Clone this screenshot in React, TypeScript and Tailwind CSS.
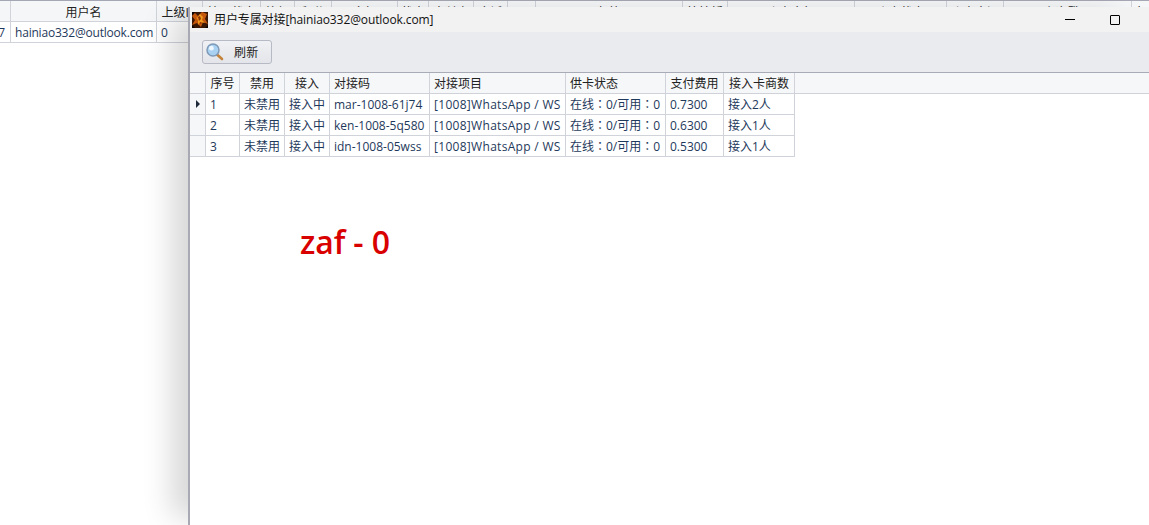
import * as React from 'react';

const backColumns = [
  { label: '', width: 'w-[11px]' },
  { label: '用户名', width: 'w-[146px]' },
  { label: '上级ID', width: 'w-[46px]' },
  { label: '接入状态', width: 'w-[58px]' },
  { label: '等级', width: 'w-[34px]' },
  { label: '积分', width: 'w-[37px]' },
  { label: '余额', width: 'w-[66px]' },
  { label: '状态', width: 'w-[31px]' },
  { label: '支付宝', width: 'w-[45px]' },
  { label: '电话', width: 'w-[34px]' },
  { label: 'QQ', width: 'w-[28px]' },
  { label: '邮箱', width: 'w-[147px]' },
  { label: '快捷折', width: 'w-[45px]' },
  { label: '账户余额', width: 'w-[127px]' },
  { label: '账户状态', width: 'w-[92px]' },
  { label: '账户来源', width: 'w-[57px]' },
  { label: '上次登录', width: 'w-[128px]' },
  { label: '备', width: 'w-[18px]' },
];

const columns = [
  { label: '序号', width: 'w-[34px]', align: 'text-center' },
  { label: '禁用', width: 'w-[45px]', align: 'text-center' },
  { label: '接入', width: 'w-[45px]', align: 'text-center' },
  { label: '对接码', width: 'w-[100px]', align: 'pl-[4px]' },
  { label: '对接项目', width: 'w-[136px]', align: 'pl-[4px]' },
  { label: '供卡状态', width: 'w-[100px]', align: 'pl-[4px]' },
  { label: '支付费用', width: 'w-[58px]', align: 'text-center' },
  { label: '接入卡商数', width: 'w-[71px]', align: 'text-center' },
];

const rows = [
  ['1', '未禁用', '接入中', 'mar-1008-61j74', '[1008]WhatsApp / WS', '在线：0/可用：0', '0.7300', '接入2人'],
  ['2', '未禁用', '接入中', 'ken-1008-5q580', '[1008]WhatsApp / WS', '在线：0/可用：0', '0.6300', '接入1人'],
  ['3', '未禁用', '接入中', 'idn-1008-05wss', '[1008]WhatsApp / WS', '在线：0/可用：0', '0.5300', '接入1人'],
];

// the project and card status columns need their own tracking / centred colon
const cellExtra = (c: number) => {
  if (c === 4) return 'tracking-[0.3px]';
  if (c === 5) return "font-['Open_Sans','Noto_Sans_CJK_TC',sans-serif]";
  return '';
};

const App: React.FC = () => {
  return (
    <div className="relative h-[525px] w-[1149px] overflow-hidden bg-white font-['Open_Sans','Noto_Sans_CJK_SC',sans-serif] text-[12px] text-[#1e395b]">
      {/* grid behind the window */}
      <div className="flex h-[22px] border-t border-b border-t-[#a5a8b4] border-b-[#d0d3da] bg-[#f5f6f7]">
        {backColumns.map((col, i) => (
          <div
            key={i}
            className={`${col.width} shrink-0 overflow-hidden whitespace-nowrap border-r border-[#d0d3da] text-center leading-[23px] text-[#222]`}
          >
            {col.label}
          </div>
        ))}
      </div>
      <div className="flex h-[21px] w-[189px] border-b border-[#d0d3da]">
        <div className="flex w-[11px] shrink-0 justify-end border-r border-[#d0d3da] pr-[5px] leading-[22px]">7</div>
        <div className="w-[146px] shrink-0 border-r border-[#d0d3da] pl-[4px] leading-[22px] tracking-[-0.2px]">hainiao332@outlook.com</div>
        <div className="pl-[4px] leading-[22px]">0</div>
      </div>

      {/* window */}
      <div className="absolute left-[188px] top-[7px] flex h-[518px] w-[961px] flex-col border-l-2 border-[#a8a9b3] bg-white shadow-[-24px_0_28px_-8px_rgba(0,0,0,0.16)]">
        <div className="flex h-[25px] items-center bg-[#f2f2f2] pl-[2px] text-[#111]">
          <svg width="16" height="16" viewBox="0 0 16 16" className="shrink-0">
            <rect width="16" height="16" fill="#3a1604" />
            <path d="M0 4 3 1 6 4 10 0 15 2 13 7 16 12 11 10 9 15 5 11 0 13 3 8Z" fill="#c4560c" />
            <path d="M3 4 5 6 8 2 11 5 10 8 13 11 8 10 6 13 6 8Z" fill="#f09a1e" />
            <path d="M6 5 8 4 9 7 7 9ZM10 11 8 12 8 10Z" fill="#8a3206" />
            <path d="M0 0H3L0 3ZM16 16H13L16 13ZM0 16H3L0 13Z" fill="#0d0502" />
          </svg>
          <span className="ml-[6px] whitespace-nowrap tracking-[-0.1px]">用户专属对接[hainiao332@outlook.com]</span>
          <div className="ml-auto mr-[29px] flex items-center gap-[35px]">
            <div className="h-px w-[10px] bg-black" />
            <div className="h-[10px] w-[10px] rounded-[1px] border border-black" />
          </div>
        </div>

        <div className="flex h-[41px] shrink-0 items-center border-b border-[#a9abb6] bg-[#e9ebef] pl-[12px]">
          <div className="flex h-[24px] w-[70px] items-center rounded-[3px] border border-[#b7bac4] bg-gradient-to-b from-[#f0f1f4] to-[#e3e5ea] pl-[3px] text-[#222]">
            <svg width="18" height="18" viewBox="0 0 18 18" className="shrink-0">
              <path d="M11 11.5 16 16" stroke="#c4833a" strokeWidth="2.6" strokeLinecap="round" />
              <circle cx="7" cy="7" r="6" fill="#a9d2f2" stroke="#7f9ab8" strokeWidth="1.5" />
              <circle cx="5.4" cy="5.2" r="2.4" fill="#eef7ff" />
            </svg>
            <span className="ml-[10px] pt-[2px] tracking-[0.2px]">刷新</span>
          </div>
        </div>

        <div className="flex h-[21px] w-full shrink-0 border-b border-[#cfd2d9] bg-[#f6f7f8] text-[#222]">
          <div className="w-[16px] shrink-0 border-r border-[#d0d3da]" />
          {columns.map((col) => (
            <div
              key={col.label}
              className={`${col.width} ${col.align} shrink-0 whitespace-nowrap border-r border-[#d0d3da] leading-[22px]`}
            >
              {col.label}
            </div>
          ))}
        </div>
        {rows.map((row, r) => (
          <div key={r} className="flex h-[21px] shrink-0">
            <div className="flex w-[16px] shrink-0 items-center justify-center border-r border-b border-[#d0d3da] bg-[#f6f7f8]">
              {r === 0 && <div className="h-0 w-0 border-y-[4px] border-l-[4px] border-y-transparent border-l-[#1e2a3a]" />}
            </div>
            {row.map((cell, c) => (
              <div
                key={c}
                className={`${columns[c].width} ${cellExtra(c)} shrink-0 overflow-hidden whitespace-nowrap border-r border-b border-[#d0d3da] pl-[4px] leading-[22px]`}
              >
                {cell}
              </div>
            ))}
          </div>
        ))}

        <div className="ml-[110px] mt-[65px] text-[32px] font-semibold leading-[40px] tracking-[-0.1px] text-[#d90000]">zaf - 0</div>
      </div>
    </div>
  );
};

export default App;
